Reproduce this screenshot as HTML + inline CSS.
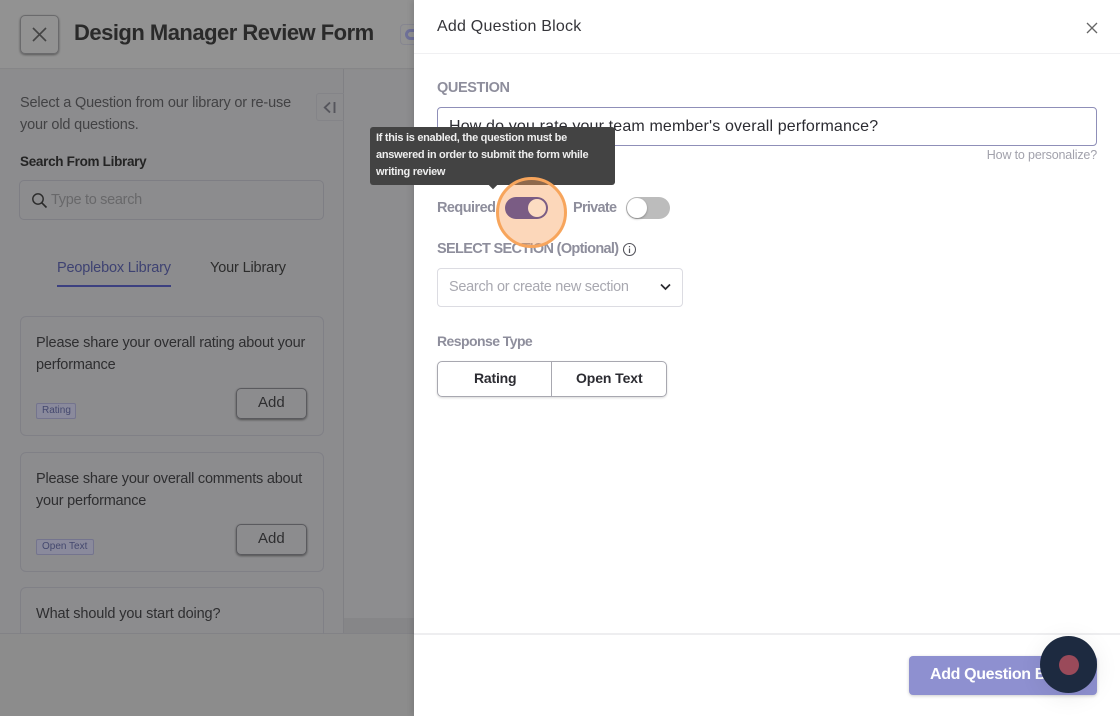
<!DOCTYPE html>
<html>
<head>
<meta charset="utf-8">
<style>
html,body{margin:0;padding:0;width:1120px;height:716px;overflow:hidden;background:#8c8c8c;font-family:"Liberation Sans",sans-serif}
.a{position:absolute;white-space:nowrap}
.b{position:absolute;box-sizing:border-box}
</style>
</head>
<body>
<div class="b" style="left:0;top:0;width:414px;height:69px;background:#929292;border-bottom:1px solid #868688"></div>
<div class="b" style="left:0;top:70px;width:344px;height:564px;background:#8c8c8e"></div>
<div class="b" style="left:343px;top:69px;width:1px;height:565px;background:#808084"></div>
<div class="b" style="left:344px;top:70px;width:70px;height:548px;background:#8d8d8f"></div>
<div class="b" style="left:344px;top:618px;width:70px;height:16px;background:#868688"></div>
<div class="b" style="left:0;top:633px;width:414px;height:83px;background:#8c8c8c;border-top:1px solid #828286"></div>

<div class="b" style="left:20px;top:15px;width:39px;height:39px;border:1px solid #6a6a6c;border-radius:5px;box-shadow:0 1px 2px rgba(0,0,0,.4)"></div>
<svg class="a" style="left:32px;top:27px" width="15" height="15" viewBox="0 0 15 15"><path d="M1 1L14 14M14 1L1 14" stroke="#444" stroke-width="1.6" fill="none"/></svg>
<div class="a" style="left:74px;top:18px;font-size:22px;line-height:30px;font-weight:700;color:#2a2a2a;letter-spacing:-.51px">Design Manager Review Form</div>
<div class="b" style="left:400px;top:24px;width:14px;height:21px;border:1px solid #868690;border-right:0;border-radius:4px 0 0 4px"></div>
<div class="b" style="left:405px;top:29px;width:9px;height:11px;border:3px solid #6e7098;border-right:0;border-radius:6px 0 0 6px"></div>

<div class="a" style="left:20px;top:93px;font-size:14.5px;line-height:21.5px;color:#424244;letter-spacing:-.16px">Select a Question from our library or re-use<br>your old questions.</div>
<div class="b" style="left:316px;top:93px;width:28px;height:28px;border:1px solid #848488;border-right:0;border-radius:3px 0 0 3px"></div>
<svg class="a" style="left:323px;top:100px" width="14" height="15" viewBox="0 0 14 15"><path d="M7 2.5L1.8 7.5L7 12.5M11.5 2V13" stroke="#55555c" stroke-width="1.9" fill="none"/></svg>
<div class="a" style="left:20px;top:152px;font-size:13.5px;line-height:20px;font-weight:700;color:#242424;letter-spacing:-.3px">Search From Library</div>
<div class="b" style="left:19px;top:180px;width:305px;height:40px;border:1px solid #7e7e84;border-radius:5px"></div>
<svg class="a" style="left:31px;top:192px" width="17" height="17" viewBox="0 0 17 17"><circle cx="7" cy="7" r="5.2" stroke="#2a2a2a" stroke-width="1.4" fill="none"/><path d="M10.8 10.8L15.5 15.5" stroke="#2a2a2a" stroke-width="1.6"/></svg>
<div class="a" style="left:51px;top:190px;font-size:14.5px;line-height:20px;color:#68686a;letter-spacing:-.3px">Type to search</div>

<div class="a" style="left:57px;top:258px;font-size:14.5px;line-height:20px;color:#3e4272;letter-spacing:-.18px">Peoplebox Library</div>
<div class="b" style="left:57px;top:285px;width:114px;height:2px;background:#3c4080"></div>
<div class="a" style="left:210px;top:258px;font-size:14.5px;line-height:20px;color:#2c2c2c;letter-spacing:-.15px">Your Library</div>

<div class="b" style="left:20px;top:316px;width:304px;height:120px;border:1px solid #808086;border-radius:6px"></div>
<div class="a" style="left:36px;top:333px;font-size:14.5px;line-height:21.5px;color:#2e2e30;letter-spacing:-.17px">Please share your overall rating about your<br>performance</div>
<div class="b" style="left:36px;top:403px;width:40px;height:16px;background:#8a8a9c;border:1px solid #74748e;border-radius:2px"></div>
<div class="a" style="left:42px;top:404px;font-size:10px;line-height:13px;color:#44486e">Rating</div>
<div class="b" style="left:236px;top:388px;width:71px;height:31px;border:1px solid #5a5a5e;border-radius:5px;box-shadow:0 1px 2px rgba(0,0,0,.45)"></div>
<div class="a" style="left:258px;top:393px;font-size:15px;line-height:20px;color:#2e2e30">Add</div>

<div class="b" style="left:20px;top:452px;width:304px;height:120px;border:1px solid #808086;border-radius:6px"></div>
<div class="a" style="left:36px;top:469px;font-size:14.5px;line-height:21.5px;color:#2e2e30;letter-spacing:-.22px">Please share your overall comments about<br>your performance</div>
<div class="b" style="left:36px;top:539px;width:58px;height:16px;background:#8a8a9c;border:1px solid #74748e;border-radius:2px"></div>
<div class="a" style="left:42px;top:540px;font-size:10px;line-height:13px;color:#44486e">Open Text</div>
<div class="b" style="left:236px;top:524px;width:71px;height:31px;border:1px solid #5a5a5e;border-radius:5px;box-shadow:0 1px 2px rgba(0,0,0,.45)"></div>
<div class="a" style="left:258px;top:529px;font-size:15px;line-height:20px;color:#2e2e30">Add</div>

<div class="b" style="left:20px;top:587px;width:304px;height:47px;border:1px solid #808086;border-bottom:0;border-radius:6px 6px 0 0"></div>
<div class="a" style="left:36px;top:604px;font-size:14.5px;line-height:21px;color:#2e2e30;letter-spacing:-.12px">What should you start doing?</div>

<!-- drawer -->
<div class="b" style="left:414px;top:0;width:706px;height:716px;background:#fff;box-shadow:-2px 0 6px rgba(0,0,0,.12)"></div>
<div class="b" style="left:414px;top:53px;width:706px;height:1px;background:#f0f0f2"></div>
<div class="a" style="left:437px;top:16px;font-size:16px;line-height:21px;color:#35353a;letter-spacing:.22px">Add Question Block</div>
<svg class="a" style="left:1086px;top:22px" width="12" height="12" viewBox="0 0 12 12"><path d="M1 1L11 11M11 1L1 11" stroke="#666" stroke-width="1.3" fill="none"/></svg>
<div class="a" style="left:437px;top:78px;font-size:14.5px;line-height:20px;color:#8e8e9c;font-weight:700;letter-spacing:-.4px">QUESTION</div>
<div class="b" style="left:437px;top:107px;width:660px;height:39px;border:1px solid #8f8fb8;border-radius:4px"></div>
<div class="a" style="left:449px;top:116px;font-size:16px;line-height:21px;color:#2c2c32;letter-spacing:.15px">How do you rate your team member's overall performance?</div>
<div class="a" style="right:23px;top:147px;font-size:12.5px;line-height:16px;color:#a2a2ac;letter-spacing:-.16px">How to personalize?</div>

<div class="a" style="left:437px;top:198px;font-size:14.5px;line-height:20px;color:#8e8e9c;font-weight:700;letter-spacing:-.55px">Required</div>
<div class="a" style="left:573px;top:198px;font-size:14.5px;line-height:20px;color:#8e8e9c;font-weight:700;letter-spacing:-.72px">Private</div>
<div class="b" style="left:626px;top:197px;width:44px;height:22px;background:#bcbcbc;border-radius:11px"></div>
<div class="b" style="left:627px;top:198px;width:20px;height:20px;background:#fff;border-radius:50%;box-shadow:0 1px 2px rgba(0,0,0,.3)"></div>

<div class="a" style="left:437px;top:239px;font-size:14.5px;line-height:20px;color:#8e8e9c;font-weight:700;letter-spacing:-.67px">SELECT SECTION (Optional)</div>
<svg class="a" style="left:622px;top:242px" width="15" height="15" viewBox="0 0 15 15"><circle cx="7.5" cy="7.5" r="6" stroke="#55555c" stroke-width="1.1" fill="none"/><path d="M7.5 6.5V11M7.5 4V5.2" stroke="#55555c" stroke-width="1.2"/></svg>
<div class="b" style="left:437px;top:268px;width:246px;height:39px;border:1px solid #dcdce2;border-radius:4px"></div>
<div class="a" style="left:449px;top:277px;font-size:14.5px;line-height:20px;color:#a8a8b0;letter-spacing:-.29px">Search or create new section</div>
<svg class="a" style="left:660px;top:283px" width="11" height="8" viewBox="0 0 11 8"><path d="M1 1.5L5.5 6L10 1.5" stroke="#2a2a30" stroke-width="1.7" fill="none"/></svg>

<div class="a" style="left:437px;top:331px;font-size:14px;line-height:20px;color:#8e8e9c;font-weight:700;letter-spacing:-.56px">Response Type</div>
<div class="b" style="left:437px;top:361px;width:230px;height:36px;border:1px solid #a8a8b0;border-radius:5px;box-shadow:0 1px 2px rgba(0,0,0,.15)"></div>
<div class="b" style="left:551px;top:361px;width:1px;height:36px;background:#a8a8b0"></div>
<div class="a" style="left:474px;top:369px;font-size:14px;line-height:19px;color:#2c2c32;font-weight:700;letter-spacing:-.2px">Rating</div>
<div class="a" style="left:576px;top:369px;font-size:14px;line-height:19px;color:#2c2c32;font-weight:700;letter-spacing:-.1px">Open Text</div>

<div class="b" style="left:414px;top:633px;width:706px;height:2px;background:#eeeef0"></div>
<div class="b" style="left:909px;top:656px;width:188px;height:39px;background:#8e90d0;border-radius:4px;box-shadow:0 1px 3px rgba(0,0,0,.2)"></div>
<div class="a" style="left:930px;top:664px;font-size:16px;line-height:21px;color:#fff;font-weight:700;letter-spacing:-.35px">Add Question Block</div>

<!-- tooltip -->
<div class="b" style="left:370px;top:127px;width:245px;height:58px;background:#434343;border-radius:3px"></div>
<div class="b" style="left:490px;top:182px;width:6px;height:6px;background:#434343;transform:rotate(45deg)"></div>
<div class="a" style="left:376px;top:130px;font-size:11px;line-height:17px;color:#eee;font-weight:700;letter-spacing:-.3px">If this is enabled, the question must be<br>answered in order to submit the form while<br>writing review</div>

<!-- highlight -->
<div class="b" style="left:496px;top:177px;width:71px;height:71px;background:rgba(248,160,90,.42);border:3px solid #f7a55c;border-radius:50%"></div>
<div class="b" style="left:505px;top:197px;width:43px;height:22px;background:#7a5c84;border-radius:11px"></div>
<div class="b" style="left:528px;top:199px;width:18px;height:18px;background:#fcdcc2;border-radius:50%"></div>

<!-- record button -->
<div class="b" style="left:1040px;top:636px;width:57px;height:57px;background:#1d2a40;border-radius:50%;box-shadow:0 4px 24px rgba(0,0,0,.08)"></div>
<div class="b" style="left:1059px;top:655px;width:20px;height:20px;background:#9a4a5a;border-radius:50%"></div>
</body>
</html>
